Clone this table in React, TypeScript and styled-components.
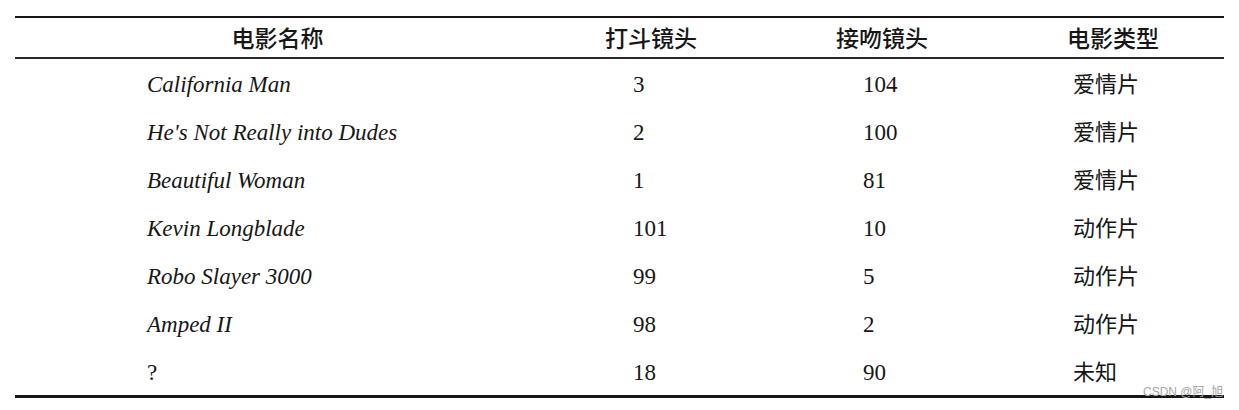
import React from "react";
import styled, { createGlobalStyle } from "styled-components";

const GlobalStyle = createGlobalStyle`
  html, body {
    margin: 0;
    padding: 0;
    background: #ffffff;
  }
  body {
    font-family: "Liberation Serif", "Noto Sans CJK SC", serif;
    color: #151515;
  }
`;

const Page = styled.div`
  position: relative;
  width: 1239px;
  height: 410px;
  padding: 16px 15px 0 15px;
  box-sizing: border-box;
`;

const Table = styled.table`
  width: 1209px;
  border-collapse: collapse;
  table-layout: fixed;
  border-top: 2px solid #161616;
  border-bottom: 3px solid #161616;
`;

const HeadRow = styled.tr`
  height: 39px;
  border-bottom: 2px solid #2a2a2a;
`;

const HeadCell = styled.th`
  padding: 0;
  text-align: center;
  vertical-align: middle;
  font-family: "Noto Sans CJK SC", sans-serif;
  font-size: 23px;
  font-weight: 500;
  line-height: 39px;
  color: #161616;
`;

const Row = styled.tr`
  height: 48px;
`;

const Cell = styled.td<{ $pad: number; $kind?: "title" | "num" | "cjk" }>`
  padding: ${(p) => (p.$kind === "cjk" ? "0 0 2px" : "3px 0 0")} ${(p) => p.$pad}px;
  height: ${(p) => (p.$kind === "cjk" ? "46px" : "45px")};
  box-sizing: content-box;
  vertical-align: middle;
  text-align: left;
  white-space: nowrap;
  line-height: ${(p) => (p.$kind === "cjk" ? "46px" : "45px")};
  color: #161616;
  font-family: ${(p) =>
    p.$kind === "cjk"
      ? `"Noto Sans CJK SC", sans-serif`
      : `"Liberation Serif", "Noto Sans CJK SC", serif`};
  font-size: ${(p) => (p.$kind === "cjk" ? "22px" : "23px")};
  font-style: ${(p) => (p.$kind === "title" ? "italic" : "normal")};
`;

const Watermark = styled.div`
  position: absolute;
  left: 1143px;
  top: 384px;
  font-family: "Liberation Sans", "Noto Sans CJK SC", sans-serif;
  font-size: 12px;
  line-height: 16px;
  color: #a6a6a6;
  white-space: nowrap;
`;

type Movie = { title: string; fights: string; kisses: string; genre: string; plain?: boolean };

const movies: Movie[] = [
  { title: "California Man", fights: "3", kisses: "104", genre: "爱情片" },
  { title: "He's Not Really into Dudes", fights: "2", kisses: "100", genre: "爱情片" },
  { title: "Beautiful Woman", fights: "1", kisses: "81", genre: "爱情片" },
  { title: "Kevin Longblade", fights: "101", kisses: "10", genre: "动作片" },
  { title: "Robo Slayer 3000", fights: "99", kisses: "5", genre: "动作片" },
  { title: "Amped II", fights: "98", kisses: "2", genre: "动作片" },
  { title: "?", fights: "18", kisses: "90", genre: "未知", plain: true },
];

export default function App() {
  return (
    <>
      <GlobalStyle />
      <Page>
        <Table>
          <colgroup>
            <col style={{ width: 525 }} />
            <col style={{ width: 222 }} />
            <col style={{ width: 240 }} />
            <col style={{ width: 222 }} />
          </colgroup>
          <thead>
            <HeadRow>
              <HeadCell>电影名称</HeadCell>
              <HeadCell>打斗镜头</HeadCell>
              <HeadCell>接吻镜头</HeadCell>
              <HeadCell>电影类型</HeadCell>
            </HeadRow>
          </thead>
          <tbody>
            {movies.map((m) => (
              <Row key={m.title}>
                <Cell $pad={132} $kind={m.plain ? "num" : "title"}>
                  {m.title}
                </Cell>
                <Cell $pad={93} $kind="num">
                  {m.fights}
                </Cell>
                <Cell $pad={101} $kind="num">
                  {m.kisses}
                </Cell>
                <Cell $pad={71} $kind="cjk">
                  {m.genre}
                </Cell>
              </Row>
            ))}
          </tbody>
        </Table>
        <Watermark>CSDN @阿_旭</Watermark>
      </Page>
    </>
  );
}
